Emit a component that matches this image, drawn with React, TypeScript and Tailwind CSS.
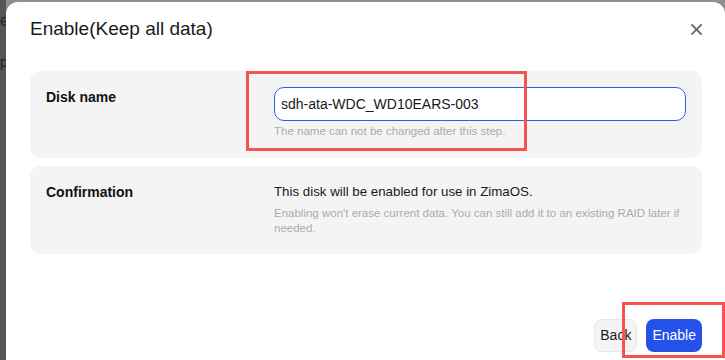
import React from 'react';

const FONT = { fontFamily: '"Liberation Sans", Arial, sans-serif' };

function CloseIcon() {
  return (
    <svg width="11" height="11" viewBox="0 0 11 11" fill="none">
      <path d="M1 1L10 10M10 1L1 10" stroke="#6b6b6b" strokeWidth="1.8" strokeLinecap="square" />
    </svg>
  );
}

export default function App() {
  return (
    <div
      className="relative w-[725px] h-[360px] overflow-hidden flex bg-[#8f8f8f]"
      style={FONT}
    >
      {/* dimmed page behind the dialog */}
      <div className="relative w-[6px] h-full bg-[#565656] overflow-hidden shrink-0">
        <span className="absolute left-0 top-[13px] text-[16px] leading-none text-[#222]">e</span>
        <span className="absolute left-0 top-[55px] text-[14px] leading-none text-[#222]">p</span>
      </div>

      <div className="flex-1 flex flex-col">
        <div className="h-[2px] shrink-0" />
        <div className="flex-1 bg-white rounded-t-[12px] pl-[24px] pr-[23px] pt-[15px]">
          {/* Header */}
          <div className="flex items-center justify-between h-[24px]">
            <h2 className="text-[19px] leading-[24px] text-[#1a1a1a] font-normal">
              Enable(Keep all data)
            </h2>
            <button className="w-[11px] h-[11px] flex items-center justify-center">
              <CloseIcon />
            </button>
          </div>

          {/* Disk name */}
          <div className="mt-[30px] bg-[#f4f4f4] rounded-[10px] flex px-[16px] pt-[16px] h-[87px]">
            <div className="w-[228px] shrink-0 text-[14px] leading-[20px] font-bold text-[#111]">
              Disk name
            </div>
            <div className="flex-1">
              <input
                readOnly
                value="sdh-ata-WDC_WD10EARS-003"
                className="block w-full h-[34px] rounded-[10px] border border-[#2f5ce8] bg-white px-[6px] text-[14px] text-[#1a1a1a] outline-none"
              />
              <p className="mt-[2px] text-[11.5px] leading-[16px] text-[#ababab]">
                The name can not be changed after this step.
              </p>
            </div>
          </div>

          {/* Confirmation */}
          <div className="mt-[8px] bg-[#f4f4f4] rounded-[10px] flex px-[16px] pt-[16px] h-[88px]">
            <div className="w-[228px] shrink-0 text-[14px] leading-[20px] font-bold text-[#111]">
              Confirmation
            </div>
            <div className="flex-1">
              <p className="text-[13.3px] leading-[20px] text-[#1a1a1a]">
                This disk will be enabled for use in ZimaOS.
              </p>
              <p className="mt-[4px] text-[11.5px] leading-[15px] text-[#ababab]">
                Enabling won't erase current data. You can still add it to an existing RAID later if needed.
              </p>
            </div>
          </div>

          {/* Footer */}
          <div className="mt-[65px] flex justify-end gap-[9px]">
            <button className="h-[33px] px-[5px] rounded-[8px] border border-[#e6e6e6] bg-[#f4f4f4] text-[14px] text-[#1a1a1a]">
              Back
            </button>
            <button className="h-[33px] px-[6px] rounded-[8px] bg-[#2451e8] text-[14px] text-white">
              Enable
            </button>
          </div>
        </div>
      </div>

      {/* annotation boxes */}
      <div className="absolute left-[246px] top-[71px] w-[281px] h-[80px] border-[3px] border-[#f25353] pointer-events-none" />
      <div className="absolute left-[622px] top-[302px] w-[103px] h-[56px] border-[3px] border-[#f25353] pointer-events-none" />
    </div>
  );
}
